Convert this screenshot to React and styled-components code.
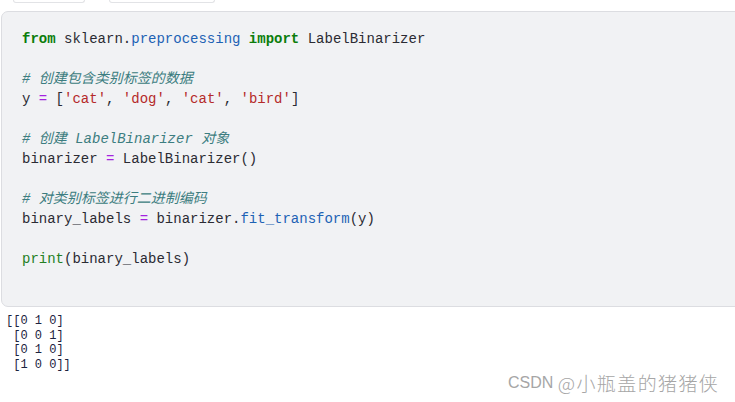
import React from "react";
import styled, { createGlobalStyle } from "styled-components";

const Global = createGlobalStyle`
  html, body { margin: 0; padding: 0; background: #ffffff; }
  body { width: 735px; height: 402px; overflow: hidden; position: relative; }
`;

const Page = styled.div`
  position: relative;
  width: 735px;
  height: 402px;
  overflow: hidden;
`;

const TabRow = styled.div`
  display: flex;
  gap: 24px;
  height: 11px;
  padding-left: 13px;
`;

const Tab = styled.div`
  width: ${(p) => p.w}px;
  height: 2px;
  border: 1px solid #e2e3e6;
  border-top: none;
  border-radius: 0 0 6px 6px;
  background: #ffffff;
`;

const CodeBox = styled.pre`
  margin: 0 0 0 1px;
  width: 760px;
  box-sizing: border-box;
  background: #f1f2f4;
  border: 1px solid #dcdde1;
  border-radius: 7px;
  padding: 17px 20px 37px;
  font-family: "Liberation Mono", "Noto Sans CJK SC", monospace;
  font-size: 14px;
  line-height: 20px;
  color: #2b2b33;
`;

const Line = styled.div`
  height: 20px;
  white-space: pre;
`;

const Kw = styled.span`
  color: #0b7d0b;
  font-weight: bold;
`;
const Fn = styled.span`
  color: #1d62b4;
`;
const Builtin = styled.span`
  color: #248024;
`;
const Op = styled.span`
  color: #a523e0;
`;
const Str = styled.span`
  color: #b52a2a;
`;
const Comment = styled.span`
  color: #3c7d80;
  font-style: italic;
`;

const Output = styled.pre`
  margin: 0;
  padding: 7px 0 0 6px;
  font-family: "Liberation Mono", monospace;
  font-size: 12px;
  line-height: 14.7px;
  color: #1c2340;
`;

const Watermark = styled.div`
  position: absolute;
  left: 508px;
  top: 371px;
  font-family: "Liberation Sans", "Noto Sans CJK SC", sans-serif;
  font-size: 16px;
  line-height: 23px;
  color: #a6a6a6;
  white-space: nowrap;
`;

const WatermarkCjk = styled.span`
  font-family: "Noto Sans CJK SC", sans-serif;
  font-size: 19px;
  font-weight: 300;
  letter-spacing: 1.4px;
  vertical-align: top;
`;

export default function App() {
  return (
    <Page>
      <Global />
      <TabRow>
        <Tab w={70} />
        <Tab w={104} />
      </TabRow>
      <CodeBox>
        <Line>
          <Kw>from</Kw> sklearn.<Fn>preprocessing</Fn> <Kw>import</Kw> LabelBinarizer
        </Line>
        <Line> </Line>
        <Line>
          <Comment># 创建包含类别标签的数据</Comment>
        </Line>
        <Line>
          y <Op>=</Op> [<Str>'cat'</Str>, <Str>'dog'</Str>, <Str>'cat'</Str>, <Str>'bird'</Str>]
        </Line>
        <Line> </Line>
        <Line>
          <Comment># 创建 LabelBinarizer 对象</Comment>
        </Line>
        <Line>
          binarizer <Op>=</Op> LabelBinarizer()
        </Line>
        <Line> </Line>
        <Line>
          <Comment># 对类别标签进行二进制编码</Comment>
        </Line>
        <Line>
          binary_labels <Op>=</Op> binarizer.<Fn>fit_transform</Fn>(y)
        </Line>
        <Line> </Line>
        <Line>
          <Builtin>print</Builtin>(binary_labels)
        </Line>
      </CodeBox>
      <Output>{"[[0 1 0]\n [0 0 1]\n [0 1 0]\n [1 0 0]]"}</Output>
      <Watermark>
        CSDN <WatermarkCjk>@小瓶盖的猪猪侠</WatermarkCjk>
      </Watermark>
    </Page>
  );
}
